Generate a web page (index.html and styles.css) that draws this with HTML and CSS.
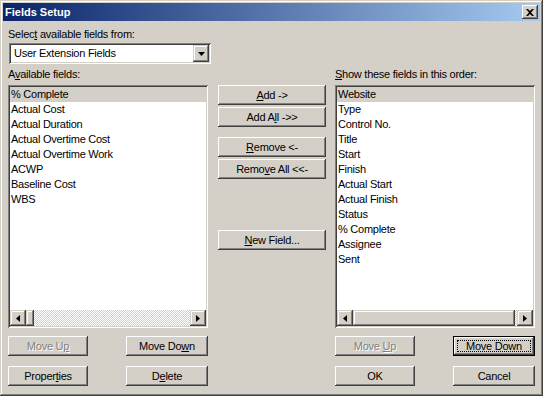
FILE: index.html
```html
<!DOCTYPE html>
<html lang="en">
<head>
    <meta charset="UTF-8">
    <title>Fields Setup</title>
    <link rel="stylesheet" href="styles.css">
</head>
<body>
    <div class="window">
        <div class="titlebar">
            <span class="title">Fields Setup</span>
            <span class="close-btn">
                <svg width="8" height="7" viewBox="0 0 8 7"><path d="M0 0h2l2 2 2-2h2L5 3.5 8 7H6L4 5 2 7H0l3-3.5z" fill="#000"/></svg>
            </span>
        </div>

        <div class="content">
            <div class="caption">Selec<u>t</u> available fields from:</div>
            <div class="combo">
                <span class="combo-text">User Extension Fields</span>
                <span class="combo-btn">
                    <svg width="7" height="4" viewBox="0 0 7 4"><path d="M0 0h7L3.5 4z" fill="#000"/></svg>
                </span>
            </div>

            <div class="columns">
                <!-- left: available fields -->
                <div class="column">
                    <div class="caption list-caption">A<u>v</u>ailable fields:</div>
                    <div class="listbox">
                        <ul class="items">
                            <li class="selected">% Complete</li>
                            <li>Actual Cost</li>
                            <li>Actual Duration</li>
                            <li>Actual Overtime Cost</li>
                            <li>Actual Overtime Work</li>
                            <li>ACWP</li>
                            <li>Baseline Cost</li>
                            <li>WBS</li>
                        </ul>
                        <div class="hscroll">
                            <span class="arrow"><svg width="4" height="7" viewBox="0 0 4 7"><path d="M4 0v7L0 3.5z" fill="#000"/></svg></span>
                            <span class="track"><span class="thumb thumb-small"></span></span>
                            <span class="arrow"><svg width="4" height="7" viewBox="0 0 4 7"><path d="M0 0v7l4-3.5z" fill="#000"/></svg></span>
                        </div>
                    </div>
                    <div class="btn-row">
                        <button class="btn btn-narrow" disabled>Move U<u>p</u></button>
                        <button class="btn btn-wide">Move Do<u>w</u>n</button>
                    </div>
                    <div class="btn-row">
                        <button class="btn btn-narrow">Proper<u>t</u>ies</button>
                        <button class="btn btn-wide">D<u>e</u>lete</button>
                    </div>
                </div>

                <!-- middle: transfer buttons -->
                <div class="actions">
                    <button class="btn"><u>A</u>dd -&gt;</button>
                    <button class="btn gap-small">Add A<u>l</u>l -&gt;&gt;</button>
                    <button class="btn gap-group"><u>R</u>emove &lt;-</button>
                    <button class="btn gap-small">Remo<u>v</u>e All &lt;&lt;-</button>
                    <button class="btn gap-new"><u>N</u>ew Field...</button>
                </div>

                <!-- right: shown fields -->
                <div class="column">
                    <div class="caption list-caption"><u>S</u>how these fields in this order:</div>
                    <div class="listbox">
                        <ul class="items">
                            <li class="selected">Website</li>
                            <li>Type</li>
                            <li>Control No.</li>
                            <li>Title</li>
                            <li>Start</li>
                            <li>Finish</li>
                            <li>Actual Start</li>
                            <li>Actual Finish</li>
                            <li>Status</li>
                            <li>% Complete</li>
                            <li>Assignee</li>
                            <li>Sent</li>
                        </ul>
                        <div class="hscroll">
                            <span class="arrow"><svg width="4" height="7" viewBox="0 0 4 7"><path d="M4 0v7L0 3.5z" fill="#000"/></svg></span>
                            <span class="track"><span class="thumb thumb-wide"></span></span>
                            <span class="arrow"><svg width="4" height="7" viewBox="0 0 4 7"><path d="M0 0v7l4-3.5z" fill="#000"/></svg></span>
                        </div>
                    </div>
                    <div class="btn-row">
                        <button class="btn btn-narrow" disabled>Move <u>U</u>p</button>
                        <button class="btn btn-wide btn-default">Move Down</button>
                    </div>
                    <div class="btn-row">
                        <button class="btn btn-narrow">OK</button>
                        <button class="btn btn-wide">Cancel</button>
                    </div>
                </div>
            </div>
        </div>
    </div>
</body>
</html>
```

FILE: styles.css
```css
body {
    margin: 0;
    background-color: #d4d0c8;
    font-family: "Liberation Sans", Arial, sans-serif;
    font-size: 11px;
    letter-spacing: -0.25px;
    color: #000;
}
.window {
    width: 543px;
    height: 396px;
    box-sizing: border-box;
    padding: 3px;
    background-color: #d4d0c8;
    box-shadow: inset -1px -1px #404040, inset 1px 1px #d4d0c8, inset -2px -2px #808080, inset 2px 2px #fff;
}
.titlebar {
    height: 18px;
    display: flex;
    align-items: center;
    justify-content: space-between;
    padding: 0 2px 0 2px;
    background: linear-gradient(to right, #0a246a, #a6caf0);
}
.title {
    color: #fff;
    font-weight: bold;
    font-size: 11px;
    letter-spacing: 0;
}
.close-btn {
    width: 16px;
    height: 14px;
    display: flex;
    align-items: center;
    justify-content: center;
    background-color: #d4d0c8;
    box-shadow: inset -1px -1px #404040, inset 1px 1px #fff, inset -2px -2px #808080;
}
.content {
    padding: 7px 5px 0 5px;
}
.caption {
    height: 13px;
    line-height: 13px;
    white-space: nowrap;
}
.combo {
    width: 202px;
    height: 21px;
    margin: 2px 0 0 1px;
    padding: 2px;
    box-sizing: border-box;
    display: flex;
    background-color: #fff;
    box-shadow: inset 1px 1px #808080, inset -1px -1px #fff, inset 2px 2px #404040, inset -2px -2px #d4d0c8;
}
.combo-text {
    flex: 1;
    line-height: 17px;
    padding-left: 3px;
}
.combo-btn {
    width: 16px;
    height: 17px;
    display: flex;
    align-items: center;
    justify-content: center;
    background-color: #d4d0c8;
    box-shadow: inset -1px -1px #404040, inset 1px 1px #d4d0c8, inset -2px -2px #808080, inset 2px 2px #fff;
}
.columns {
    display: flex;
    margin-top: 4px;
}
.column {
    width: 200px;
}
.list-caption {
    margin-bottom: 4px;
}
.listbox {
    height: 243px;
    box-sizing: border-box;
    padding: 2px;
    display: flex;
    flex-direction: column;
    background-color: #fff;
    box-shadow: inset 1px 1px #808080, inset -1px -1px #fff, inset 2px 2px #404040, inset -2px -2px #d4d0c8;
}
.items {
    flex: 1;
    list-style: none;
    margin: 0;
    padding: 0;
}
.items li {
    height: 15px;
    line-height: 15px;
    padding-left: 1px;
    white-space: nowrap;
}
.items li.selected {
    background-color: #d4d0c8;
}
.hscroll {
    height: 16px;
    display: flex;
}
.arrow {
    width: 16px;
    height: 16px;
    display: flex;
    align-items: center;
    justify-content: center;
    background-color: #d4d0c8;
    box-shadow: inset -1px -1px #404040, inset 1px 1px #d4d0c8, inset -2px -2px #808080, inset 2px 2px #fff;
}
.track {
    flex: 1;
    display: flex;
    background: repeating-conic-gradient(#d4d0c8 0 25%, #fff 0 50%) 0 0 / 2px 2px;
}
.thumb {
    height: 16px;
    background-color: #d4d0c8;
    box-shadow: inset -1px -1px #404040, inset 1px 1px #d4d0c8, inset -2px -2px #808080, inset 2px 2px #fff;
}
.thumb-small {
    width: 8px;
}
.thumb-wide {
    width: 162px;
}
.actions {
    width: 108px;
    margin: 0 9px 0 10px;
    padding-top: 17px;
    display: flex;
    flex-direction: column;
}
.btn {
    position: relative;
    height: 20px;
    padding: 0;
    border: none;
    font-family: inherit;
    font-size: 11px;
    letter-spacing: inherit;
    color: #000;
    background-color: #d4d0c8;
    box-shadow: inset -1px -1px #404040, inset 1px 1px #fff, inset -2px -2px #808080, inset 2px 2px #d4d0c8;
}
.btn:disabled {
    color: #808080;
    text-shadow: 1px 1px 0 #fff;
}
.btn-default {
    box-shadow: inset 0 0 0 1px #000, inset -2px -2px #404040, inset 2px 2px #fff, inset -3px -3px #808080;
}
.btn-default::after {
    content: "";
    position: absolute;
    top: 4px;
    left: 4px;
    right: 4px;
    bottom: 4px;
    border: 1px dotted #000;
}
.gap-small {
    margin-top: 2px;
}
.gap-group {
    margin-top: 10px;
}
.gap-new {
    margin-top: 51px;
}
.btn-row {
    display: flex;
    justify-content: space-between;
    margin-top: 8px;
}
.btn-row + .btn-row {
    margin-top: 10px;
}
.btn-narrow {
    width: 80px;
}
.btn-wide {
    width: 82px;
}
```
